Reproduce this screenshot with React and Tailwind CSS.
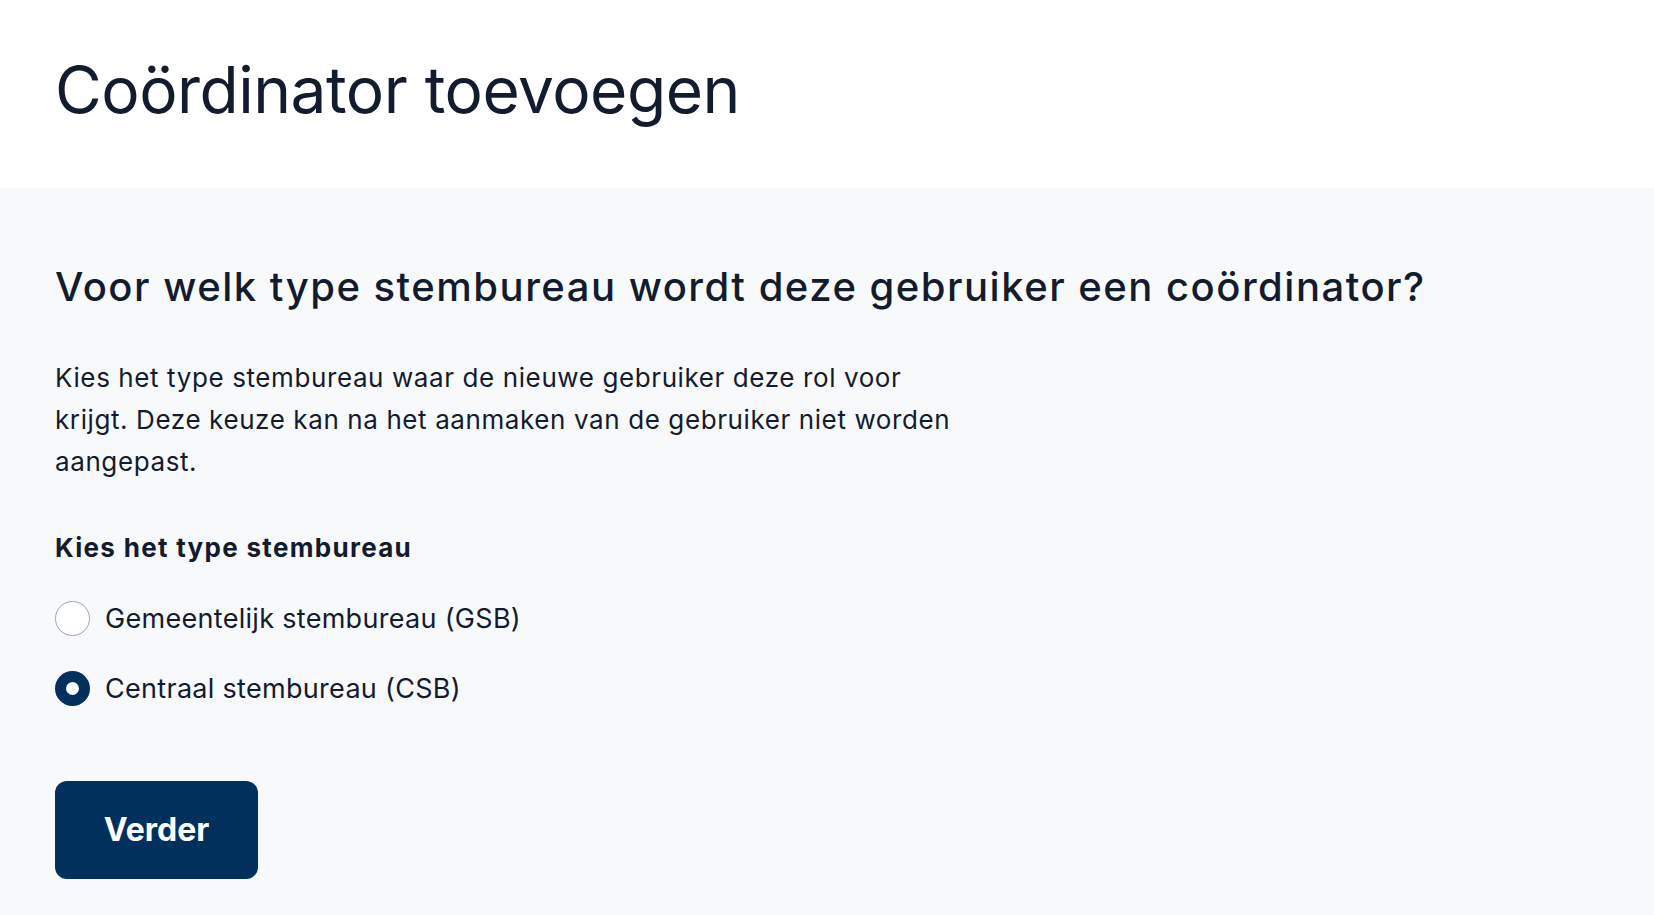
import { useState } from "react";

const opties = [
  { value: "GSB", label: "Gemeentelijk stembureau (GSB)" },
  { value: "CSB", label: "Centraal stembureau (CSB)" },
];

export default function App() {
  const [type, setType] = useState("CSB");

  return (
    <div className="min-h-[915px] bg-[#f8f9fb] text-[#131b2e] font-['Inter',sans-serif]">
      <header className="h-[188px] bg-white px-[55px] pt-[58px]">
        <h1 className="text-[64px] leading-none font-normal tracking-[-0.5px]">Coördinator toevoegen</h1>
      </header>

      <main className="px-[55px] pt-[79px] pb-10">
        <h2 className="text-[40px] leading-none font-medium tracking-[1.5px]">
          Voor welk type stembureau wordt deze gebruiker een coördinator?
        </h2>

        <p className="mt-[50px] max-w-[910px] text-[26px] leading-[42px] tracking-[0.6px]">
          Kies het type stembureau waar de nieuwe gebruiker deze rol voor krijgt. Deze keuze kan na het aanmaken van de
          gebruiker niet worden aangepast.
        </p>

        <fieldset className="mt-[49px]">
          <legend className="text-[26px] leading-[32px] font-bold tracking-[1.3px]">Kies het type stembureau</legend>
          <div className="mt-[37px] flex flex-col gap-[35px]">
            {opties.map((optie) => (
              <label key={optie.value} className="flex items-center gap-[15px] cursor-pointer">
                <input
                  type="radio"
                  name="type"
                  value={optie.value}
                  checked={type === optie.value}
                  onChange={() => setType(optie.value)}
                  className="sr-only"
                />
                <span
                  className={
                    type === optie.value
                      ? "w-[35px] h-[35px] rounded-full bg-[#02305c] flex items-center justify-center"
                      : "w-[35px] h-[35px] rounded-full bg-white border border-[#9aa3b5]"
                  }
                >
                  {type === optie.value && <span className="w-[13px] h-[13px] rounded-full bg-white" />}
                </span>
                <span className="text-[27px] leading-[35px] tracking-[0.3px]">{optie.label}</span>
              </label>
            ))}
          </div>
        </fieldset>

        <button className="mt-[75px] w-[203px] h-[98px] rounded-[12px] bg-[#02305c] text-white text-[32px] font-bold">
          Verder
        </button>
      </main>
    </div>
  );
}
